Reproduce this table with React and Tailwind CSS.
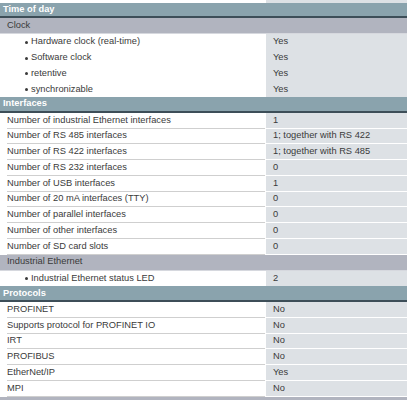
import React from "react";

const sections = [
	{
		title: "Time of day",
		groups: [
			{
				sub: "Clock",
				rows: [
					["Hardware clock (real-time)", "Yes", true],
					["Software clock", "Yes", true],
					["retentive", "Yes", true],
					["synchronizable", "Yes", true],
				],
			},
		],
	},
	{
		title: "Interfaces",
		groups: [
			{
				rows: [
					["Number of industrial Ethernet interfaces", "1"],
					["Number of RS 485 interfaces", "1; together with RS 422"],
					["Number of RS 422 interfaces", "1; together with RS 485"],
					["Number of RS 232 interfaces", "0"],
					["Number of USB interfaces", "1"],
					["Number of 20 mA interfaces (TTY)", "0"],
					["Number of parallel interfaces", "0"],
					["Number of other interfaces", "0"],
					["Number of SD card slots", "0"],
				],
			},
			{
				sub: "Industrial Ethernet",
				rows: [["Industrial Ethernet status LED", "2", true]],
			},
		],
	},
	{
		title: "Protocols",
		groups: [
			{
				rows: [
					["PROFINET", "No"],
					["Supports protocol for PROFINET IO", "No"],
					["IRT", "No"],
					["PROFIBUS", "No"],
					["EtherNet/IP", "Yes"],
					["MPI", "No"],
				],
			},
		],
	},
];

function Row({ label, value, bullet }) {
	return (
		<div className="flex h-[15.78px]">
			<div
				className={
					"w-[266px] shrink-0 flex items-center pr-px " +
					(bullet ? "pl-[25px]" : "pl-[7px]")
				}
			>
				<div
					className={
						"h-full w-full flex items-center " +
						(bullet ? "" : "border-b border-[#cfcfcf]")
					}
				>
					{bullet && (
						<span className="w-[3px] h-[3px] rounded-full bg-[#3a3a3a] mr-[3px] mt-px" />
					)}
					{label}
				</div>
			</div>
			<div
				className={
					"flex-1 flex items-center pl-[7px] bg-[#dde1e5] " +
					(bullet ? "" : "border-b border-white")
				}
			>
				{value}
			</div>
		</div>
	);
}

export default function App() {
	return (
		<div
			className="w-[407px] h-[400px] overflow-hidden bg-white text-[9.3px] text-[#3a3a3a] leading-none"
			style={{ fontFamily: '"Liberation Sans", Arial, sans-serif' }}
		>
			<div className="flex h-[2.5px]">
				<div className="w-[266px]" />
				<div className="flex-1 bg-[#dde1e5]" />
			</div>
			{sections.map((s) => (
				<div key={s.title}>
					<div className="h-[15.78px] flex items-center pl-[3px] bg-[#8aa3ad] border-b-2 border-[#3d4e58] text-white font-bold">
						{s.title}
					</div>
					{s.groups.map((g, gi) => (
						<div key={gi}>
							{g.sub && (
								<div className="h-[15.78px] flex items-center pl-[7px] bg-[#b1b4bf] border-b border-[#d6d8de]">
									{g.sub}
								</div>
							)}
							{g.rows.map((r) => (
								<Row key={r[0]} label={r[0]} value={r[1]} bullet={r[2]} />
							))}
						</div>
					))}
				</div>
			))}
			<div className="h-[4px] bg-[#b1b4bf]" />
		</div>
	);
}
